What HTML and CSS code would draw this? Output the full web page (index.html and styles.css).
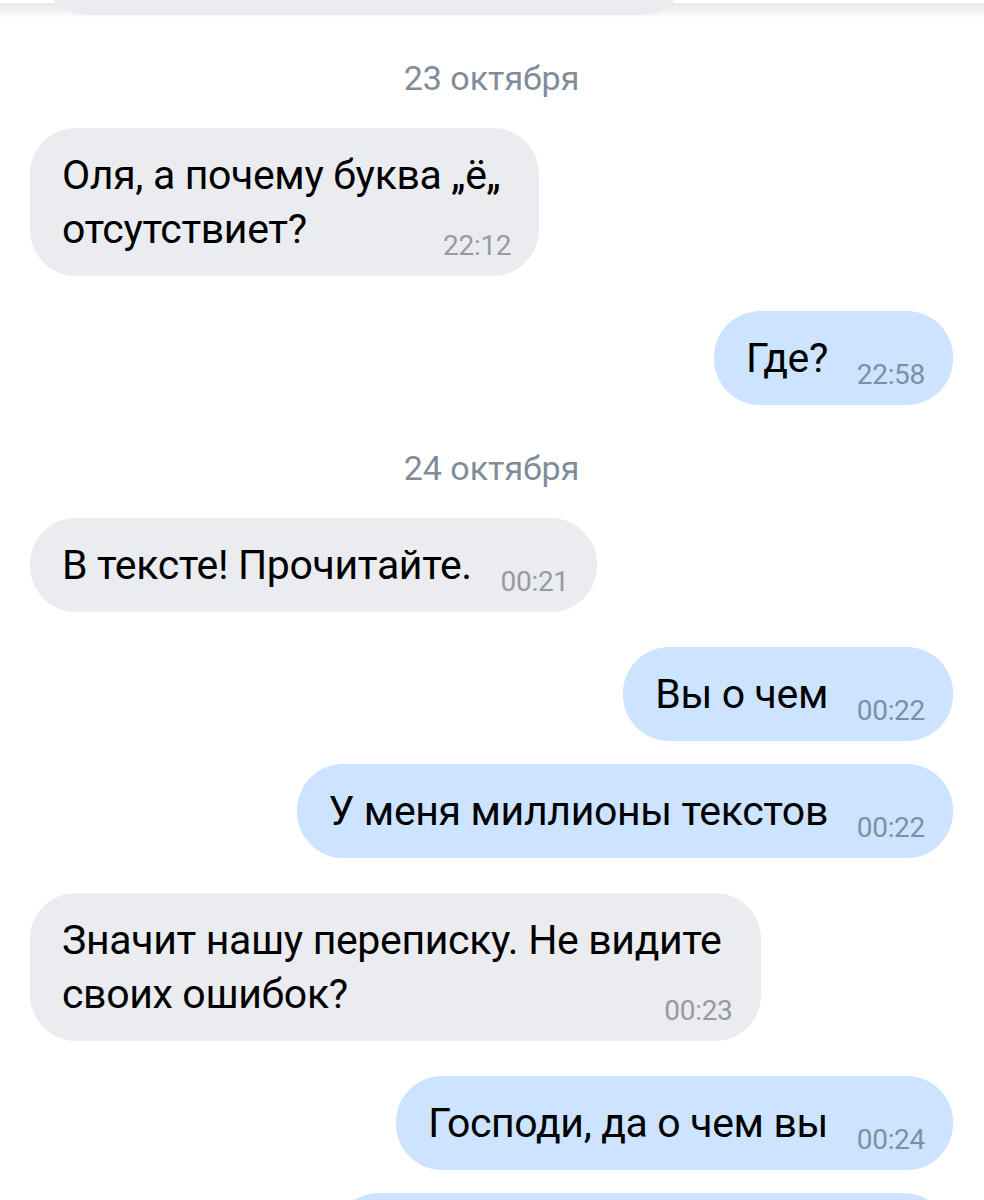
FILE: index.html
```html
<!DOCTYPE html>
<html lang="ru">

<head>
    <meta charset="UTF-8">
    <meta name="viewport" content="width=device-width, initial-scale=1.0">
    <title>Переписка</title>
    <link rel="stylesheet" href="styles.css">
</head>

<body>
    <div class="top-shade"></div>

    <main class="chat">
        <div class="msg in stub"></div>

        <div class="day">23 октября</div>
        <div class="msg in multi">
            <p>Оля, а почему буква „ё„<br>отсутствиет?<i class="pad"></i></p>
            <time>22:12</time>
        </div>
        <div class="msg out">
            <p>Где?<i class="pad"></i></p>
            <time>22:58</time>
        </div>

        <div class="day">24 октября</div>
        <div class="msg in">
            <p>В тексте! Прочитайте.<i class="pad"></i></p>
            <time>00:21</time>
        </div>
        <div class="msg out">
            <p>Вы о чем<i class="pad"></i></p>
            <time>00:22</time>
        </div>
        <div class="msg out more">
            <p>У меня миллионы текстов<i class="pad"></i></p>
            <time>00:22</time>
        </div>
        <div class="msg in multi">
            <p>Значит нашу переписку. Не видите<br>своих ошибок?<i class="pad"></i></p>
            <time>00:23</time>
        </div>
        <div class="msg out">
            <p>Господи, да о чем вы<i class="pad"></i></p>
            <time>00:24</time>
        </div>
        <div class="msg out more stub-end"></div>
    </main>
</body>

</html>
```

FILE: styles.css
```css
body {
    margin: 0;
    background: #ffffff;
    font-family: Roboto, "Noto Sans", sans-serif;
    color: #000000;
    height: 1200px;
    overflow: hidden;
    position: relative;
}

/* header shadow over the list */
.top-shade {
    position: absolute;
    top: 0;
    left: 0;
    right: 0;
    height: 16px;
    background: linear-gradient(rgba(0, 0, 0, 0.09), rgba(0, 0, 0, 0));
    border-top: 3px solid #ffffff;
}

.chat {
    display: flex;
    flex-direction: column;
    padding: 0 31px 0 30px;
}

.msg {
    position: relative;
    padding: 20px 28px 20px 32px;
    border-radius: 46px;
    margin-top: 35px;
    font-size: 41px;
    line-height: 54px;
    letter-spacing: -0.35px;
    white-space: nowrap;
}

.msg p {
    margin: 0;
}

.msg.in {
    align-self: flex-start;
    background: #ebecf0;
}

.msg.out {
    align-self: flex-end;
    background: #cce4ff;
}

.msg.multi {
    padding-right: 39px;
}

.msg.more {
    margin-top: 23px;
}

/* keeps room for the time on the last line */
.pad {
    display: inline-block;
    width: 97px;
}

.msg time {
    position: absolute;
    right: 28px;
    bottom: 16px;
    font-size: 28px;
    line-height: 28px;
    letter-spacing: -0.3px;
    color: #999a9c;
}

.msg.out time {
    color: #7d8fa4;
}

.msg.stub {
    width: 639px;
    height: 80px;
    margin: -65px 0 0 14px;
    padding: 0;
}

.msg.stub-end {
    width: 617px;
    height: 94px;
    padding: 0;
    margin-right: 3px;
}

.day {
    margin-top: 48px;
    text-align: center;
    font-size: 34px;
    line-height: 30px;
    color: #818c99;
}
```
